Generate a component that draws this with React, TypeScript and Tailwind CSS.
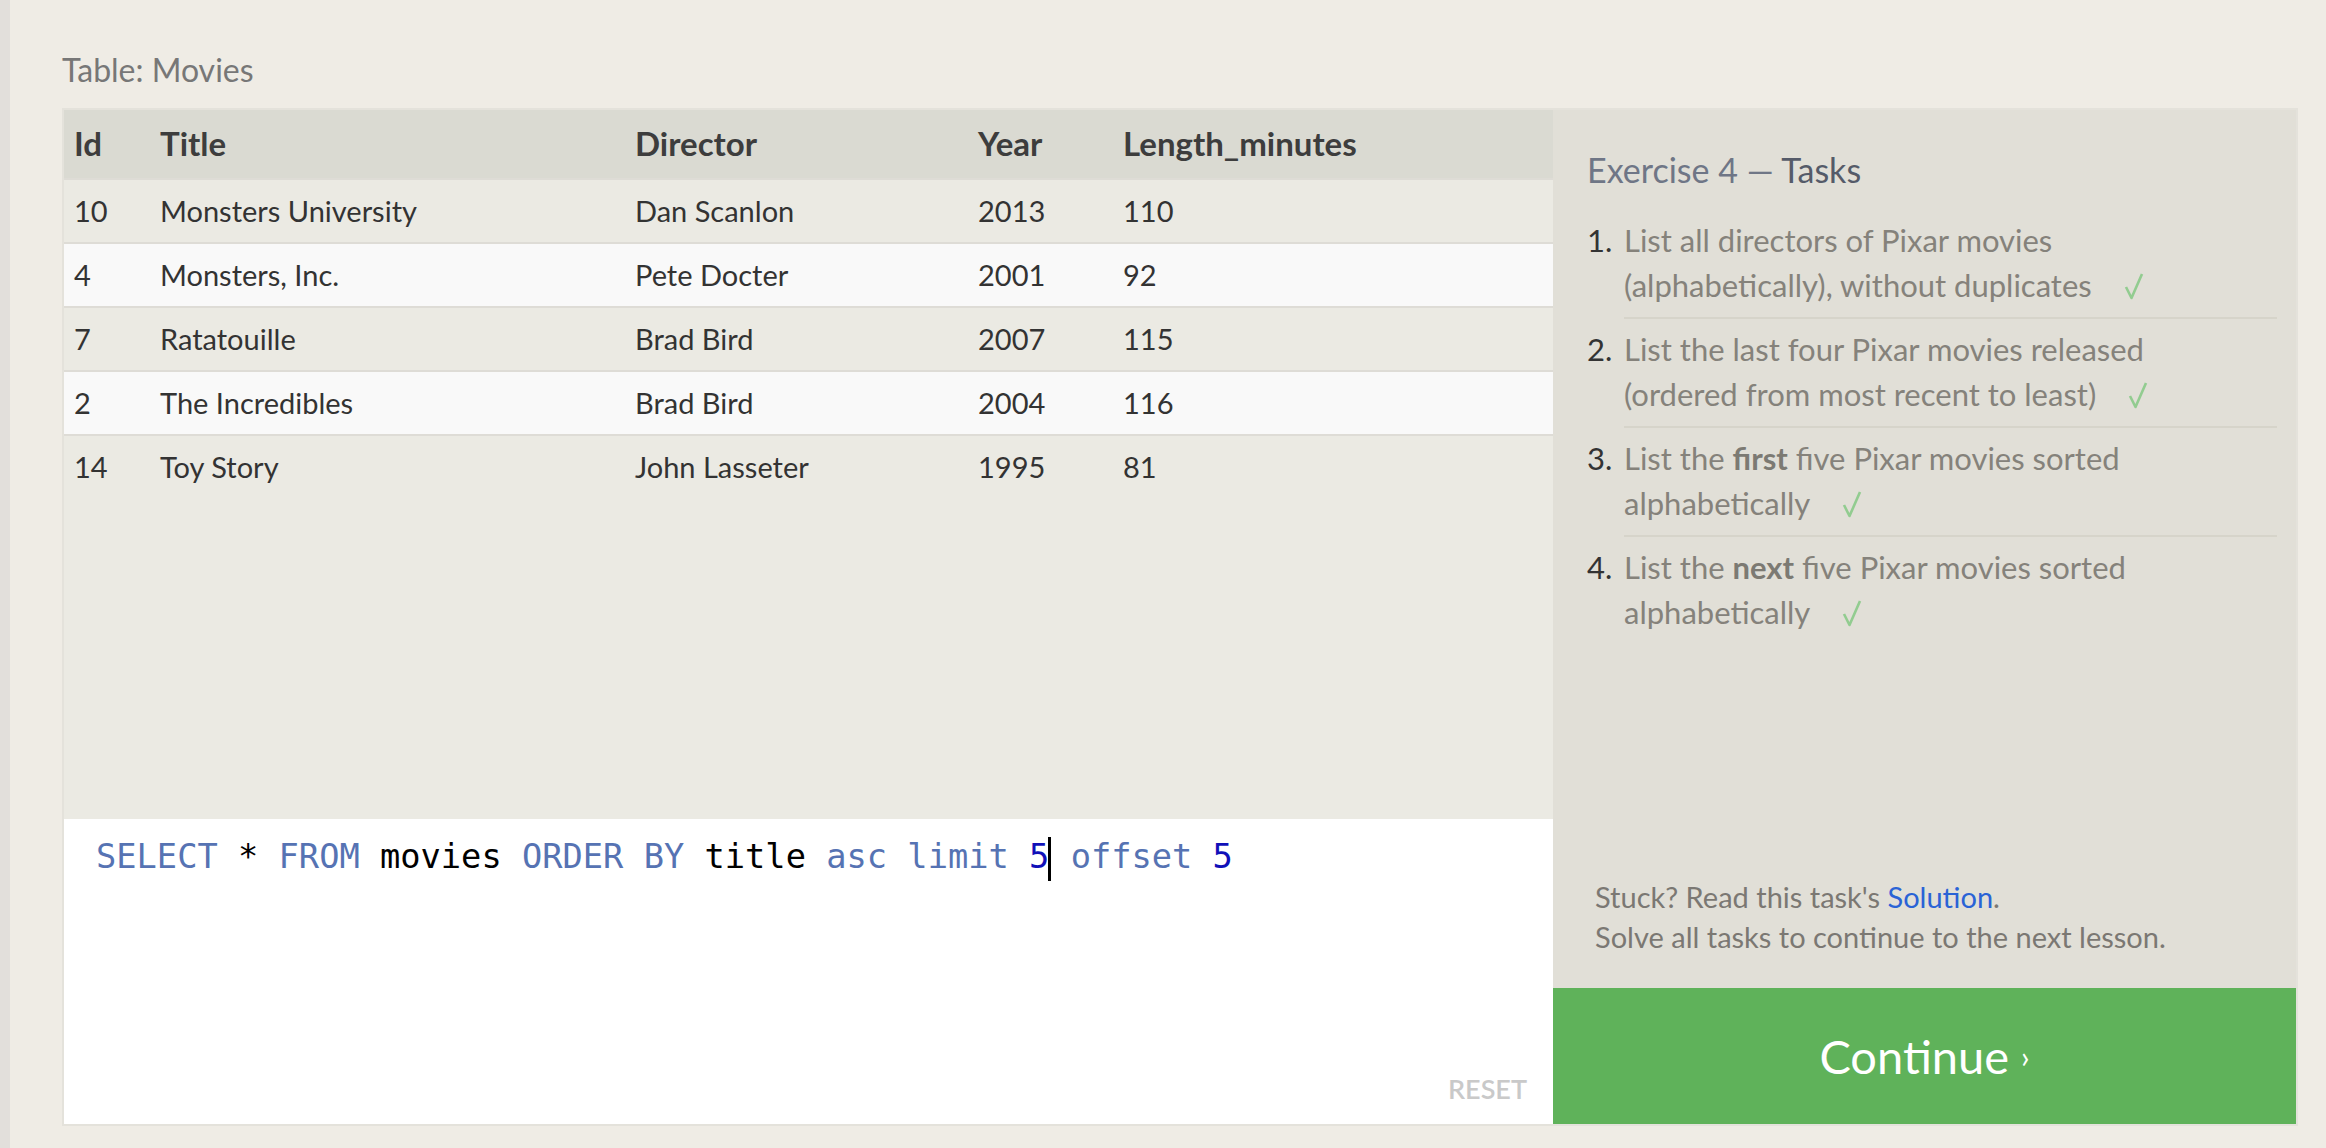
import React from 'react'

const movies = [
  { id: 10, title: 'Monsters University', director: 'Dan Scanlon', year: 2013, length: 110 },
  { id: 4, title: 'Monsters, Inc.', director: 'Pete Docter', year: 2001, length: 92 },
  { id: 7, title: 'Ratatouille', director: 'Brad Bird', year: 2007, length: 115 },
  { id: 2, title: 'The Incredibles', director: 'Brad Bird', year: 2004, length: 116 },
  { id: 14, title: 'Toy Story', director: 'John Lasseter', year: 1995, length: 81 },
]

const cols = 'grid grid-cols-[86px_475px_343px_145px_1fr] pl-[10px]'

function Check() {
  return (
    <svg className="inline-block ml-[32px] -mt-[6px] align-middle" width="20" height="28" viewBox="0 0 20 28">
      <path d="M2 15 L7.5 26 L18 2" fill="none" stroke="#92cc90" strokeWidth="2.6" strokeLinejoin="round" />
    </svg>
  )
}

const tasks: React.ReactNode[][] = [
  [<>List all directors of Pixar movies</>, <>(alphabetically), without duplicates</>],
  [<>List the last four Pixar movies released</>, <>(ordered from most recent to least)</>],
  [<>List the <b className="font-bold text-[#7c7a73]">first</b> five Pixar movies sorted</>, <>alphabetically</>],
  [<>List the <b className="font-bold text-[#7c7a73]">next</b> five Pixar movies sorted</>, <>alphabetically</>],
]

export default function App() {
  return (
    <div className="min-h-screen flex bg-[#efece5] font-[Lato,sans-serif]">
      <div className="w-[10px] bg-[#e2dfdb]" />
      <div className="flex-1 pl-[52px] pr-[28px] pt-[52px] pb-[22px]">
        <div className="text-[32px] leading-[36px] text-[#777] mb-[20px]">Table: Movies</div>

        <div className="flex border-2 border-[#e4e2db] h-[1018px]">
          {/* left: table + editor */}
          <div className="w-[1489px] flex flex-col">
            <div className="flex-1 bg-[#ebeae3]">
              <div className={`${cols} h-[68px] items-center bg-[#dadad2] text-[33px] font-bold text-[#3d3d3d]`}>
                <div>Id</div>
                <div>Title</div>
                <div>Director</div>
                <div>Year</div>
                <div>Length_minutes</div>
              </div>
              {movies.map((m, i) => (
                <div key={m.id}
                  className={`${cols} h-[64px] items-center border-t-2 border-[#dedcd6] text-[29px] leading-[36px] text-[#333] ${i % 2 ? 'bg-[#f9f9f9]' : 'bg-[#ebeae3]'}`}>
                  <div>{m.id}</div>
                  <div>{m.title}</div>
                  <div>{m.director}</div>
                  <div>{m.year}</div>
                  <div>{m.length}</div>
                </div>
              ))}
            </div>

            <div className="h-[305px] bg-white flex flex-col">
              <div className="pl-[32px] pt-[14px] font-['DejaVu_Sans_Mono',monospace] text-[33.7px] leading-[48px] whitespace-pre">
                <span className="text-[#5673b3]">SELECT</span>
                <span className="text-black"> * </span>
                <span className="text-[#5673b3]">FROM</span>
                <span className="text-black"> movies </span>
                <span className="text-[#5673b3]">ORDER BY</span>
                <span className="text-black"> title </span>
                <span className="text-[#5673b3]">asc limit </span>
                <span className="text-[#1010b8]">5</span>
                <span className="inline-block w-[3px] h-[44px] -mx-[1px] bg-black align-middle" />
                <span className="text-[#5673b3]"> offset </span>
                <span className="text-[#1010b8]">5</span>
              </div>
              <div className="flex-1" />
              <div className="flex justify-end pr-[26px] pb-[20px]">
                <span className="text-[27px] leading-[30px] font-semibold text-[#c9c9c9]">RESET</span>
              </div>
            </div>
          </div>

          {/* right: tasks */}
          <div className="flex-1 flex flex-col bg-[#e1dfd7]">
            <div className="pt-[39px] pl-[34px] pr-[19px]">
              <h2 className="text-[34px] leading-[42px] text-[#6f7686] mb-[27px]">
                Exercise 4 — <span className="text-[#555b69]">Tasks</span>
              </h2>
              <ol>
                {tasks.map((t, i) => (
                  <li key={i} className="flex text-[31px] leading-[45px]">
                    <span className="w-[37px] shrink-0 text-[#333]">{i + 1}.</span>
                    <div className={`flex-1 text-[#85827b] whitespace-nowrap ${i < 3 ? 'pb-[9px] mb-[8px] border-b-2 border-[#d6d4ca]' : ''}`}>
                      {t[0]}
                      <br />
                      {t[1]}
                      <Check />
                    </div>
                  </li>
                ))}
              </ol>
            </div>
            <div className="flex-1" />
            <div className="pl-[42px] pb-[31px] text-[29px] leading-[40px] text-[#7b7873]">
              <div>Stuck? Read this task's <span className="text-[#2a63d6]">Solution</span>.</div>
              <div>Solve all tasks to continue to the next lesson.</div>
            </div>
            <button className="h-[136px] bg-[#5fb25a] text-white text-[47px] flex items-center justify-center">
              Continue <span className="ml-[12px] text-[30px]">›</span>
            </button>
          </div>
        </div>
      </div>
    </div>
  )
}
